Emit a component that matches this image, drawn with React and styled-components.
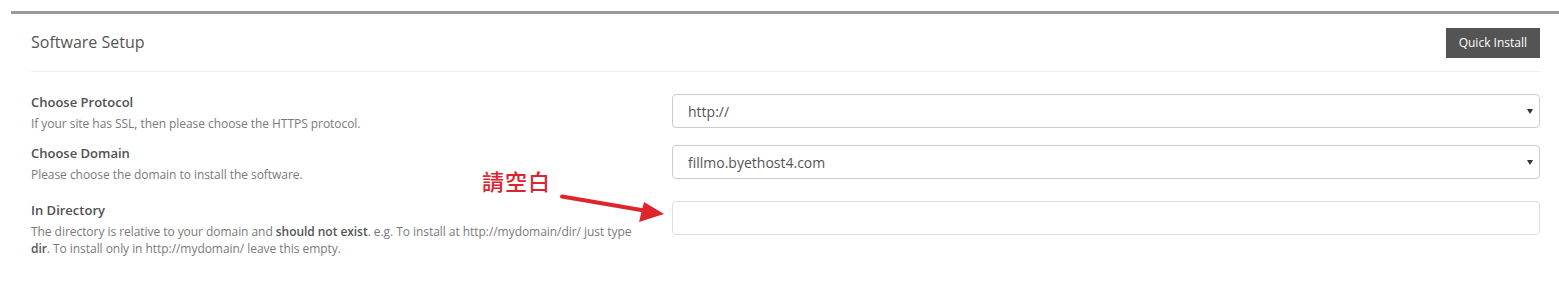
import styled, { createGlobalStyle } from "styled-components"

const GlobalStyle = createGlobalStyle`
  html, body {
    margin: 0;
    padding: 0;
    background: #fff;
  }
  body {
    font-family: "Open Sans", "Noto Sans", "Noto Sans CJK TC", sans-serif;
    color: #555;
  }
`

const Page = styled.div`
  position: relative;
  padding-top: 11px;
  padding-left: 11px;
`

const Panel = styled.div`
  border-top: 3px solid #9a9a9a;
  padding: 0 19px 0 20px;
`

const Header = styled.div`
  display: flex;
  align-items: center;
  justify-content: space-between;
  height: 58px;
  border-bottom: 1px solid #eeeeee;
  box-sizing: border-box;
`

const Title = styled.h3`
  margin: 0 0 2px 0;
  font-size: 16px;
  font-weight: 400;
  color: #555;
`

const Button = styled.button`
  height: 30px;
  padding: 0 13px;
  border: none;
  border-radius: 0;
  background: #545454;
  color: #fff;
  font-family: inherit;
  font-size: 12px;
  cursor: pointer;
`

const Body = styled.div`
  padding-top: 21px;
`

const Row = styled.div`
  display: grid;
  grid-template-columns: 610px 1fr;
  column-gap: 31px;
  align-items: start;
  margin-bottom: ${(p) => p.$space || 0}px;
`

const Label = styled.div`
  font-size: 13px;
  line-height: 18px;
  font-weight: 600;
  color: #505050;
`

const Help = styled.div`
  margin-top: 4px;
  font-size: 12px;
  line-height: 17px;
  letter-spacing: -0.05px;
  color: #7a7a7a;

  b {
    font-weight: 600;
    color: #555;
  }
`

const SelectBox = styled.div`
  position: relative;
  margin-top: ${(p) => p.$offset ?? 1}px;
  height: 34px;
  box-sizing: border-box;
  border: 1px solid #cccccc;
  border-radius: 4px;
  display: flex;
  align-items: center;
  padding-left: 15px;
  font-size: 14px;
  color: #555;
`

const Caret = styled.span`
  position: absolute;
  right: 6px;
  top: 50%;
  margin-top: -2px;
  width: 0;
  height: 0;
  border-left: 3.5px solid transparent;
  border-right: 3.5px solid transparent;
  border-top: 5px solid #333;
`

const TextInput = styled.input`
  display: block;
  width: 100%;
  margin-top: ${(p) => p.$offset ?? 1}px;
  height: 34px;
  box-sizing: border-box;
  border: 1px solid #dddddd;
  border-radius: 4px;
  padding: 0 15px;
  font-family: inherit;
  font-size: 14px;
  outline: none;
`

const Note = styled.div`
  position: absolute;
  left: 482px;
  top: 165px;
  font-family: "Noto Sans CJK TC", "Noto Sans", sans-serif;
  font-size: 22px;
  font-weight: 500;
  line-height: 30px;
  color: #dd2530;
  letter-spacing: 1px;
`

const ArrowSvg = styled.svg`
  position: absolute;
  left: 0;
  top: 0;
  pointer-events: none;
`

const Select = ({ value }) => (
  <SelectBox>
    {value}
    <Caret />
  </SelectBox>
)

const App = () => {
  return (
    <>
      <GlobalStyle />
      <Page>
        <Panel>
          <Header>
            <Title>Software Setup</Title>
            <Button>Quick Install</Button>
          </Header>
          <Body>
            <Row $space={12}>
              <div>
                <Label>Choose Protocol</Label>
                <Help>If your site has SSL, then please choose the HTTPS protocol.</Help>
              </div>
              <Select value="http://" />
            </Row>
            <Row $space={18}>
              <div>
                <Label>Choose Domain</Label>
                <Help>Please choose the domain to install the software.</Help>
              </div>
              <Select value="fillmo.byethost4.com" />
            </Row>
            <Row>
              <div>
                <Label>In Directory</Label>
                <Help>
                  The directory is relative to your domain and <b>should not exist</b>. e.g. To install at
                  http://mydomain/dir/ just type <b>dir</b>. To install only in http://mydomain/ leave this
                  empty.
                </Help>
              </div>
              <TextInput $offset={0} defaultValue="" />
            </Row>
          </Body>
        </Panel>
        <Note>請空白</Note>
        <ArrowSvg width="700" height="286" viewBox="0 0 700 286">
          <path d="M562 196.5 L647 211" stroke="#e0242c" strokeWidth="4" strokeLinecap="round" />
          <polygon points="644,202 664,214 639,222" fill="#e0242c" />
        </ArrowSvg>
      </Page>
    </>
  )
}

export default App
